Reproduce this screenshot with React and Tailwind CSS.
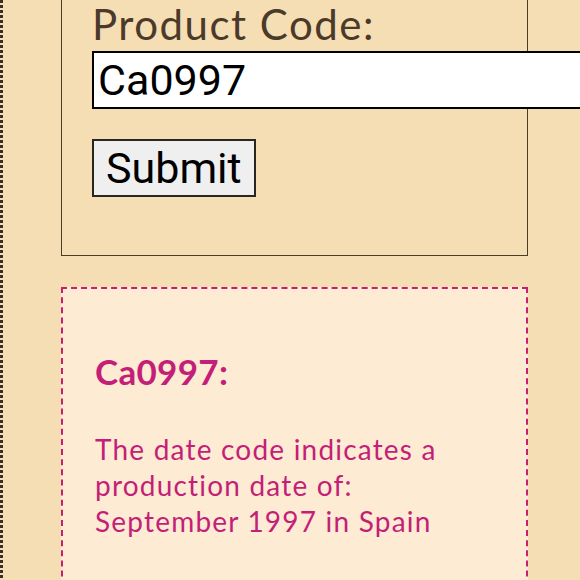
import React, { useState } from "react";

export default function App() {
  const [code, setCode] = useState("Ca0997");

  return (
    <div className="flex h-[580px] overflow-hidden bg-[#f5deb3]">
      {/* dotted left edge */}
      <div className="w-[3px] shrink-0 bg-[repeating-linear-gradient(to_bottom,#3b2f25_0px,#3b2f25_3px,transparent_3px,transparent_5px)]" />

      <div className="pl-[58px] w-[530px] shrink-0">
        {/* form box, top runs off the screen */}
        <div className="border border-t-0 border-[#4a3b2a] pl-[30px] pb-[58px] w-[467px]">
          <label
            className="block text-[42px] leading-[48px] tracking-[1.5px] text-[#4b3a2a]"
            style={{ fontFamily: "Lato, 'Liberation Sans', sans-serif" }}
          >
            Product Code:
          </label>
          <input
            type="text"
            value={code}
            onChange={(e) => setCode(e.target.value)}
            className="mt-[3px] block w-[520px] h-[58px] bg-white border-2 border-black px-[4px] text-[43px] text-black outline-none"
            style={{ fontFamily: "Roboto, 'Liberation Sans', sans-serif" }}
          />
          <button
            className="mt-[30px] block h-[58px] px-[12px] bg-[#efefef] border-2 border-[#2b2520] text-[43px] text-black leading-none"
            style={{ fontFamily: "Roboto, 'Liberation Sans', sans-serif" }}
          >
            Submit
          </button>
        </div>

        {/* result */}
        <div
          className="mt-[31px] w-[467px] h-[320px] border-2 border-dashed border-[#c81e72] bg-[#fdebd3] pl-[32px] pt-[60px] text-[#c41f78]"
          style={{ fontFamily: "Lato, 'Noto Sans', sans-serif" }}
        >
          <h2 className="text-[35px] font-bold leading-[44px] tracking-[0.3px]">Ca0997:</h2>
          <p className="mt-[38px] text-[28px] leading-[36px] tracking-[1.2px] w-[360px]">
            The date code indicates a production date of: September 1997 in Spain
          </p>
        </div>
      </div>
    </div>
  );
}
